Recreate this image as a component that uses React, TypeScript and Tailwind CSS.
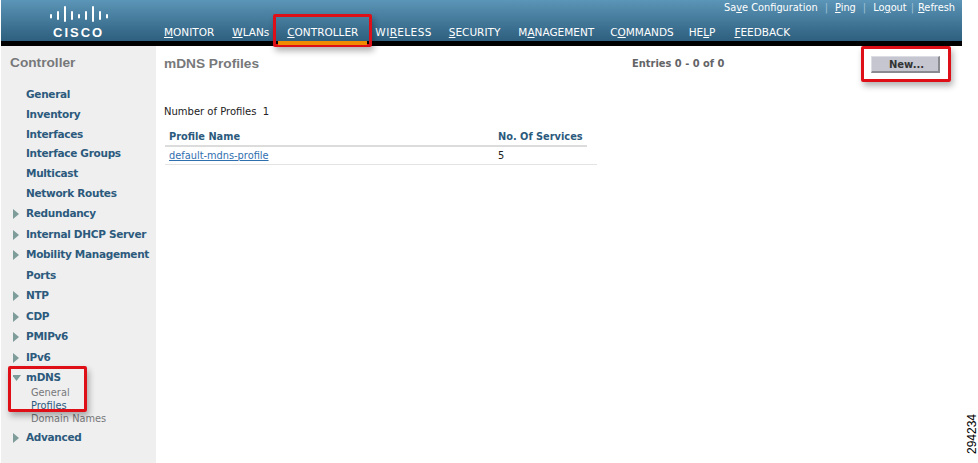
import React from 'react';

interface SideItem {
  label: string;
  arrow?: 'right' | 'down';
}

const sideItems: SideItem[] = [
  { label: 'General' },
  { label: 'Inventory' },
  { label: 'Interfaces' },
  { label: 'Interface Groups' },
  { label: 'Multicast' },
  { label: 'Network Routes' },
  { label: 'Redundancy', arrow: 'right' },
  { label: 'Internal DHCP Server', arrow: 'right' },
  { label: 'Mobility Management', arrow: 'right' },
  { label: 'Ports' },
  { label: 'NTP', arrow: 'right' },
  { label: 'CDP', arrow: 'right' },
  { label: 'PMIPv6', arrow: 'right' },
  { label: 'IPv6', arrow: 'right' },
  { label: 'mDNS', arrow: 'down' },
];

const navItems = [
  { a: '', b: 'M', c: 'ONITOR', cls: '' },
  { a: '', b: 'W', c: 'LANs', cls: 'ml-[18px]' },
  { a: '', b: 'C', c: 'ONTROLLER', cls: 'ml-[18px]' },
  { a: 'WI', b: 'R', c: 'ELESS', cls: 'ml-[17px] tracking-[0.4px]' },
  { a: '', b: 'S', c: 'ECURITY', cls: 'ml-[17px]' },
  { a: 'M', b: 'A', c: 'NAGEMENT', cls: 'ml-[18px]' },
  { a: 'C', b: 'O', c: 'MMANDS', cls: 'ml-[16px]' },
  { a: 'HE', b: 'L', c: 'P', cls: 'ml-[15px]' },
  { a: '', b: 'F', c: 'EEDBACK', cls: 'ml-[19px]' },
];

const Arrow: React.FC<{ dir?: 'right' | 'down' }> = ({ dir }) => {
  if (!dir) return <span className="w-[25px] shrink-0" />;
  return (
    <span className="w-[25px] shrink-0 pl-[12px]">
      <svg width="8" height="10" viewBox="0 0 8 10" className="block">
        {dir === 'right' ? (
          <path d="M0 0 L6 5 L0 10 Z" fill="#7d9c9a" />
        ) : (
          <path d="M-1 2 L8 2 L3.5 8 Z" fill="#7d9c9a" />
        )}
      </svg>
    </span>
  );
};

const CiscoBars = () => (
  <svg width="58" height="16" viewBox="0 0 58 16" className="block">
    <g stroke="#fff" strokeWidth="2" strokeLinecap="round">
      <path d="M1 9v2.5M8 6v7M15 1v14M22 6v7M29 9v2.5M36 6v7M43 1v14M50 6v7M57 9v2.5" />
    </g>
  </svg>
);

const RedBox: React.FC<{ className: string }> = ({ className }) => (
  <div
    className={`absolute border-[3px] border-[#de0f17] rounded-[2px] shadow-[2px_4px_6px_rgba(0,0,0,0.3)] ${className}`}
  />
);

export default function App() {
  return (
    <div className="relative w-[978px] h-[463px] overflow-hidden bg-white font-['DejaVu_Sans',sans-serif]">
      <header className="w-[961px] h-[46px] flex flex-col ml-px">
        <div className="h-[41px] flex bg-gradient-to-b from-[#5b95b7] to-[#2e5f7e]">
          <div className="w-[162px] shrink-0 flex flex-col items-start pt-[6px] pl-[49px]">
            <CiscoBars />
            <span className="ml-[3px] text-[13px] leading-[16px] font-bold tracking-[2px] text-white mt-[3px] font-['Liberation_Sans',sans-serif]">
              CISCO
            </span>
          </div>
          <div className="flex-1 flex flex-col">
            <div className="flex justify-end items-center h-[17px] pr-[7px] text-[9.8px] text-white whitespace-nowrap">
              <span>
                Sa<u>v</u>e Configuration
              </span>
              <span className="mx-[7px] text-[#9fc1d6]">|</span>
              <span>
                <u>P</u>ing
              </span>
              <span className="mx-[7px] text-[#9fc1d6]">|</span>
              <span>
                Lo<u>g</u>out
              </span>
              <span className="mx-[4px] text-[#9fc1d6]">|</span>
              <span>
                <u>R</u>efresh
              </span>
            </div>
            <nav className="flex mt-[8px] pl-[1px] text-[10.5px] leading-[14px] text-white whitespace-nowrap">
              {navItems.map((n) => (
                <span key={n.a + n.b + n.c} className={n.cls}>
                  {n.a}
                  <u>{n.b}</u>
                  {n.c}
                </span>
              ))}
            </nav>
          </div>
        </div>
        <div className="h-[5px] bg-black" />
      </header>
      <div className="flex h-[417px]">
        <aside className="w-[155px] ml-px bg-[#efefef] shrink-0">
          <h2 className="pl-[9px] pt-[8px] text-[13.7px] leading-[18px] font-bold text-[#77787a] font-['Liberation_Sans',sans-serif]">
            Controller
          </h2>
          <ul className="mt-[13px] text-[10.5px] tracking-[-0.3px] font-bold text-[#2c5a7d] whitespace-nowrap">
            {sideItems.map((it, i) => (
              <li
                key={it.label}
                className={i < 6 ? 'flex items-center h-[19.8px]' : 'flex items-center h-[20.5px]'}
              >
                <Arrow dir={it.arrow} />
                {it.label}
              </li>
            ))}
          </ul>
          <div className="-mt-[2.5px] pl-[30px] text-[9.8px] leading-[13px] text-[#77787a]">
            <div>General</div>
            <div className="text-[#2c5a7d]">Profiles</div>
            <div>Domain Names</div>
          </div>
          <div className="flex items-center h-[20px] mt-[3.5px] text-[10.5px] tracking-[-0.3px] font-bold text-[#2c5a7d]">
            <Arrow dir="right" />
            Advanced
          </div>
        </aside>
        <main className="flex-1 pl-[8px]">
          <div className="flex items-center h-[34px] w-[776px]">
            <h1 className="mt-[2px] text-[13.7px] font-bold text-[#77787a] font-['Liberation_Sans',sans-serif]">
              mDNS Profiles
            </h1>
            <span className="ml-[373px] mt-[2px] text-[9.9px] font-bold text-[#636466]">
              Entries 0 - 0 of 0
            </span>
            <button className="ml-auto mt-[3px] w-[69px] h-[17px] pl-[3px] bg-[#c5c6d0] border border-t-[#dcdde4] border-l-[#dcdde4] border-r-2 border-b-2 border-r-[#8a8b90] border-b-[#8a8b90] text-[10px] font-bold text-[#333]">
              New...
            </button>
          </div>
          <p className="mt-[25px] text-[10px] leading-[14px] text-[#222]">
            Number of Profiles&nbsp; 1
          </p>
          <div className="mt-[9px] ml-px w-[432px] text-[9.8px]">
            <div className="flex items-center h-[19px] w-[422px] pt-[1px] border-b-2 border-[#dcdcdc] font-bold text-[#2c5a7d]">
              <span className="w-[333px] pl-[4px]">Profile Name</span>
              <span>No. Of Services</span>
            </div>
            <div className="flex items-center h-[18px] pt-[1px] border-b border-[#e3e3e3] text-[#222]">
              <a className="w-[333px] pl-[4px] text-[#2f6fb0] underline">default-mdns-profile</a>
              <span>5</span>
            </div>
          </div>
        </main>
      </div>
      <RedBox className="left-[273px] top-[14px] w-[99px] h-[33px]" />
      <RedBox className="left-[861px] top-[46px] w-[90px] h-[36px]" />
      <RedBox className="left-[8px] top-[366px] w-[79px] h-[46px]" />
      <div className="absolute left-[278px] top-[41px] w-[89px] h-[4px] bg-[#f08a00]" />
      <span className="absolute left-[952px] top-[428px] w-[40px] -rotate-90 text-[12px] leading-[12px] text-black font-['Liberation_Sans',sans-serif]">
        294234
      </span>
    </div>
  );
}
